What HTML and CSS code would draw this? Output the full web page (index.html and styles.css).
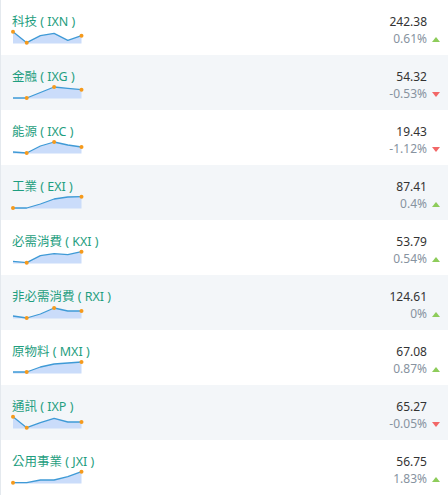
FILE: index.html
```html
<!DOCTYPE html>
<html>
<head>
<meta charset="utf-8">
<link rel="stylesheet" href="styles.css">
</head>
<body>
<div class="list">
  <div class="row">
    <div class="left">
      <div class="name">科技 ( IXN )</div>
      <svg class="spark" viewBox="0 0 72 17" width="72" height="17">
        <polygon class="area" points="1,15.5 1,3.7 14.7,14.7 28.4,7.7 42.1,5.3 55.8,12.3 69.5,7.7 69.5,15.5"/>
        <polyline class="line" points="1,3.7 14.7,14.7 28.4,7.7 42.1,5.3 55.8,12.3 69.5,7.7"/>
        <circle class="dot" cx="1" cy="3.7" r="2"/><circle class="dot" cx="14.7" cy="14.7" r="2"/><circle class="dot" cx="69.5" cy="7.7" r="2"/>
      </svg>
    </div>
    <div class="right">
      <div class="price">242.38</div>
      <div class="chg"><span>0.61%</span><i class="tri up"></i></div>
    </div>
  </div>
  <div class="row">
    <div class="left">
      <div class="name">金融 ( IXG )</div>
      <svg class="spark" viewBox="0 0 72 17" width="72" height="17">
        <polygon class="area" points="1,15.5 1,15 14.7,15 28.4,9.5 42.1,4 55.8,5.3 69.5,6.7 69.5,15.5"/>
        <polyline class="line" points="1,15 14.7,15 28.4,9.5 42.1,4 55.8,5.3 69.5,6.7"/>
        <circle class="dot" cx="14.7" cy="15" r="2"/><circle class="dot" cx="42.1" cy="4" r="2"/><circle class="dot" cx="69.5" cy="6.7" r="2"/>
      </svg>
    </div>
    <div class="right">
      <div class="price">54.32</div>
      <div class="chg"><span>-0.53%</span><i class="tri down"></i></div>
    </div>
  </div>
  <div class="row">
    <div class="left">
      <div class="name">能源 ( IXC )</div>
      <svg class="spark" viewBox="0 0 72 17" width="72" height="17">
        <polygon class="area" points="1,15.5 1,14 14.7,15 28.4,8 42.1,4 55.8,7 69.5,9 69.5,15.5"/>
        <polyline class="line" points="1,14 14.7,15 28.4,8 42.1,4 55.8,7 69.5,9"/>
        <circle class="dot" cx="14.7" cy="15" r="2"/><circle class="dot" cx="42.1" cy="4" r="2"/><circle class="dot" cx="69.5" cy="9" r="2"/>
      </svg>
    </div>
    <div class="right">
      <div class="price">19.43</div>
      <div class="chg"><span>-1.12%</span><i class="tri down"></i></div>
    </div>
  </div>
  <div class="row">
    <div class="left">
      <div class="name">工業 ( EXI )</div>
      <svg class="spark" viewBox="0 0 72 17" width="72" height="17">
        <polygon class="area" points="1,15.5 1,15 14.7,15 28.4,11 42.1,6 55.8,4 69.5,3.7 69.5,15.5"/>
        <polyline class="line" points="1,15 14.7,15 28.4,11 42.1,6 55.8,4 69.5,3.7"/>
        <circle class="dot" cx="1" cy="15" r="2"/><circle class="dot" cx="69.5" cy="3.7" r="2"/>
      </svg>
    </div>
    <div class="right">
      <div class="price">87.41</div>
      <div class="chg"><span>0.4%</span><i class="tri up"></i></div>
    </div>
  </div>
  <div class="row">
    <div class="left">
      <div class="name">必需消費 ( KXI )</div>
      <svg class="spark" viewBox="0 0 72 17" width="72" height="17">
        <polygon class="area" points="1,15.5 1,13.3 14.7,14.7 28.4,7.7 42.1,5.7 55.8,6.7 69.5,3.7 69.5,15.5"/>
        <polyline class="line" points="1,13.3 14.7,14.7 28.4,7.7 42.1,5.7 55.8,6.7 69.5,3.7"/>
        <circle class="dot" cx="14.7" cy="14.7" r="2"/><circle class="dot" cx="69.5" cy="3.7" r="2"/>
      </svg>
    </div>
    <div class="right">
      <div class="price">53.79</div>
      <div class="chg"><span>0.54%</span><i class="tri up"></i></div>
    </div>
  </div>
  <div class="row">
    <div class="left">
      <div class="name">非必需消費 ( RXI )</div>
      <svg class="spark" viewBox="0 0 72 17" width="72" height="17">
        <polygon class="area" points="1,15.5 1,13 14.7,15 28.4,11 42.1,5 55.8,8 69.5,8 69.5,15.5"/>
        <polyline class="line" points="1,13 14.7,15 28.4,11 42.1,5 55.8,8 69.5,8"/>
        <circle class="dot" cx="14.7" cy="15" r="2"/><circle class="dot" cx="42.1" cy="5" r="2"/><circle class="dot" cx="69.5" cy="8" r="2"/>
      </svg>
    </div>
    <div class="right">
      <div class="price">124.61</div>
      <div class="chg"><span>0%</span><i class="tri up"></i></div>
    </div>
  </div>
  <div class="row">
    <div class="left">
      <div class="name">原物料 ( MXI )</div>
      <svg class="spark" viewBox="0 0 72 17" width="72" height="17">
        <polygon class="area" points="1,15.5 1,14 14.7,14 28.4,9 42.1,6 55.8,5 69.5,4 69.5,15.5"/>
        <polyline class="line" points="1,14 14.7,14 28.4,9 42.1,6 55.8,5 69.5,4"/>
        <circle class="dot" cx="14.7" cy="14" r="2"/><circle class="dot" cx="69.5" cy="4" r="2"/>
      </svg>
    </div>
    <div class="right">
      <div class="price">67.08</div>
      <div class="chg"><span>0.87%</span><i class="tri up"></i></div>
    </div>
  </div>
  <div class="row">
    <div class="left">
      <div class="name">通訊 ( IXP )</div>
      <svg class="spark" viewBox="0 0 72 17" width="72" height="17">
        <polygon class="area" points="1,15.5 1,3.7 14.7,14.7 28.4,9.7 42.1,5.3 55.8,9 69.5,9 69.5,15.5"/>
        <polyline class="line" points="1,3.7 14.7,14.7 28.4,9.7 42.1,5.3 55.8,9 69.5,9"/>
        <circle class="dot" cx="1" cy="3.7" r="2"/><circle class="dot" cx="14.7" cy="14.7" r="2"/><circle class="dot" cx="69.5" cy="9" r="2"/>
      </svg>
    </div>
    <div class="right">
      <div class="price">65.27</div>
      <div class="chg"><span>-0.05%</span><i class="tri down"></i></div>
    </div>
  </div>
  <div class="row">
    <div class="left">
      <div class="name">公用事業 ( JXI )</div>
      <svg class="spark" viewBox="0 0 72 17" width="72" height="17">
        <polygon class="area" points="1,15.5 1,14.7 14.7,14.7 28.4,12 42.1,12 55.8,8.7 69.5,3.7 69.5,15.5"/>
        <polyline class="line" points="1,14.7 14.7,14.7 28.4,12 42.1,12 55.8,8.7 69.5,3.7"/>
        <circle class="dot" cx="1" cy="14.7" r="2"/><circle class="dot" cx="69.5" cy="3.7" r="2"/>
      </svg>
    </div>
    <div class="right">
      <div class="price">56.75</div>
      <div class="chg"><span>1.83%</span><i class="tri up"></i></div>
    </div>
  </div>
</div>
</body>
</html>
```
FILE: styles.css
```css
html, body {
  margin: 0;
  padding: 0;
  background: #ffffff;
}
body {
  font-family: "Noto Sans", "Noto Sans CJK TC", sans-serif;
  font-size: 12px;
}
.list {
  width: 448px;
  border-left: 1px solid #e4e9ee;
  box-sizing: border-box;
}
.row {
  height: 55px;
  box-sizing: border-box;
  display: flex;
  justify-content: space-between;
  padding: 12px 8px 0 11px;
}
.row:nth-child(even) {
  background: #f3f6f9;
}
.left {
  display: flex;
  flex-direction: column;
}
.name {
  color: #1f9e80;
  font-size: 12.5px;
  line-height: 19px;
  height: 16px;
  white-space: nowrap;
}
.spark {
  display: block;
  overflow: visible;
}
.area {
  fill: #cadcfa;
}
.line {
  fill: none;
  stroke: #3f9ad6;
  stroke-width: 1.3;
  stroke-linejoin: round;
}
.dot {
  fill: #f59a1c;
}
.right {
  display: flex;
  flex-direction: column;
  align-items: flex-end;
}
.price {
  color: #333333;
  line-height: 16px;
  margin-top: 2px;
  margin-right: 13px;
  margin-bottom: 1px;
}
.chg {
  display: flex;
  align-items: center;
  line-height: 16px;
  color: #8793a0;
}
.tri {
  display: block;
  width: 0;
  height: 0;
  margin-left: 5px;
  border-left: 4px solid transparent;
  border-right: 4px solid transparent;
}
.tri.up {
  border-bottom: 5px solid #8dcc5a;
}
.tri.down {
  border-top: 5px solid #f26767;
}
```
